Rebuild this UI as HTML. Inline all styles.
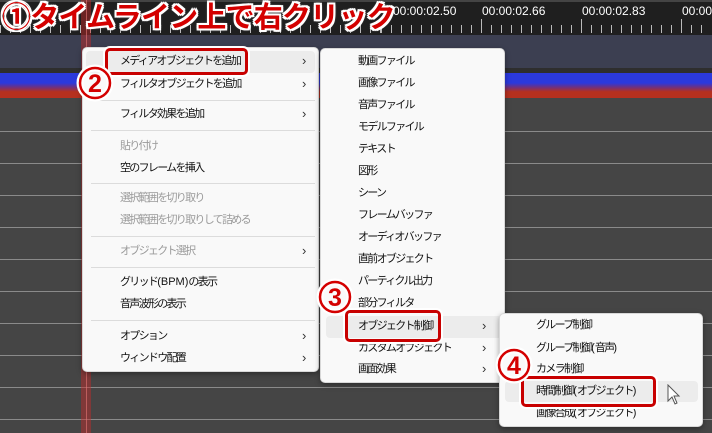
<!DOCTYPE html>
<html><head><meta charset="utf-8"><style>
*{margin:0;padding:0;box-sizing:border-box}
body{width:712px;height:433px;overflow:hidden;background:#454545;position:relative;font-family:"Liberation Sans","Noto Sans CJK JP",sans-serif}
.abs{position:absolute}
.menu{position:absolute;background:#f9f9f9;border:1px solid #d8d8d8;border-radius:5px;box-shadow:0 2px 6px rgba(0,0,0,.35)}
.it{position:absolute;font-size:11px;letter-spacing:-1.7px;color:#111;white-space:nowrap;line-height:16px}
.it b{font-weight:normal;letter-spacing:0}
.dis{color:#9a9a9a}
.chev{position:absolute;font-size:13px;color:#333;line-height:16px}
.sep{position:absolute;height:1px;background:#dcdcdc}
.hl{position:absolute;background:#ececec;border-radius:4px}
.ann{color:#d40000;font-weight:bold;text-shadow:0 0 3px #fff,0 0 3px #fff,2px 0 0 #fff,-2px 0 0 #fff,0 2px 0 #fff,0 -2px 0 #fff,2px 2px 0 #fff,-2px -2px 0 #fff,2px -2px 0 #fff,-2px 2px 0 #fff;white-space:nowrap}
.box{position:absolute;border:3px solid #c80000;border-radius:5px;box-shadow:0 0 0 2px #fff}
.hline{position:absolute;left:0;width:712px;height:1px;background:#8a8a8a}
.lbl{position:absolute;top:4px;font-size:12px;color:#fff}
.num{position:absolute}
</style></head><body>
<div class="abs" style="left:0;top:0;width:712px;height:35px;background:#1f1f1f"></div>
<div class="abs" style="left:0;top:0;width:712px;height:2px;background:#444"></div>
<svg class="abs" style="left:0;top:0" width="712" height="35">
<g stroke="#bbb" stroke-width="1">
<path d="M0.5 25V33M10.5 25V33M20.5 25V33M30.5 25V33M40.5 25V33M50.5 25V33M60.5 25V33M70.5 25V33M80.5 25V33M90.5 25V33M100.5 25V33M110.5 25V33M120.5 25V33M130.5 25V33M140.5 25V33M150.5 25V33M160.5 25V33M170.5 25V33M180.5 25V33M190.5 25V33M200.5 25V33M210.5 25V33M220.5 25V33M230.5 25V33M240.5 25V33M250.5 25V33M260.5 25V33M270.5 25V33M280.5 25V33M290.5 25V33M300.5 25V33M310.5 25V33M320.5 25V33M330.5 25V33M340.5 25V33M350.5 25V33M360.5 25V33M370.5 25V33M380.5 25V33M391.5 25V33M401.5 25V33M411.5 25V33M421.5 25V33M431.5 25V33M441.5 25V33M451.5 25V33M461.5 25V33M471.5 25V33M481.5 25V33M491.5 25V33M501.5 25V33M511.5 25V33M521.5 25V33M531.5 25V33M541.5 25V33M551.5 25V33M561.5 25V33M571.5 25V33M581.5 25V33M591.5 25V33M601.5 25V33M611.5 25V33M621.5 25V33M631.5 25V33M641.5 25V33M651.5 25V33M661.5 25V33M671.5 25V33M681.5 25V33M691.5 25V33M701.5 25V33"/>
<path d="M481.5 19V33M581.5 19V33M681.5 19V33M381.5 19V33"/>
</g></svg>
<div class="lbl" style="left:393px">00:00:02.50</div>
<div class="lbl" style="left:482px">00:00:02.66</div>
<div class="lbl" style="left:582px">00:00:02.83</div>
<div class="lbl" style="left:682px">00:00</div>
<div class="abs" style="left:0;top:35px;width:712px;height:33px;background:#3c3f51"></div>
<div class="abs" style="left:0;top:68px;width:712px;height:5px;background:#2e2e2e"></div>
<div class="abs" style="left:0;top:73px;width:712px;height:25px;background:linear-gradient(#2b39dc 0,#2b39dc 40%,#7a3070 60%,#b5301f 75%,#b5301f 100%)"></div>
<div class="hline" style="top:131px"></div><div class="hline" style="top:163px"></div><div class="hline" style="top:195px"></div><div class="hline" style="top:227px"></div><div class="hline" style="top:259px"></div><div class="hline" style="top:291px"></div><div class="hline" style="top:323px"></div><div class="hline" style="top:355px"></div><div class="hline" style="top:387px"></div><div class="hline" style="top:419px"></div>
<div class="abs" style="left:81px;top:0;width:10px;height:433px;background:rgba(200,40,40,.45)"></div>
<div class="abs" style="left:86px;top:0;width:1px;height:433px;background:rgba(230,120,120,.6)"></div>

<div class="menu" style="left:82px;top:47px;width:237px;height:325px">
<div class="hl" style="left:3px;top:3px;width:229px;height:22px"></div>
</div>
<div class="it" style="left:120px;top:53px">メディアオブジェクトを追加</div><div class="chev" style="left:302px;top:53px">›</div>
<div class="it" style="left:120px;top:76px">フィルタオブジェクトを追加</div><div class="chev" style="left:302px;top:76px">›</div>
<div class="sep" style="left:91px;top:100px;width:224px"></div>
<div class="it" style="left:120px;top:106px">フィルタ効果を追加</div><div class="chev" style="left:302px;top:106px">›</div>
<div class="sep" style="left:91px;top:130px;width:224px"></div>
<div class="it dis" style="left:120px;top:138px">貼り付け</div>
<div class="it" style="left:120px;top:160px">空のフレームを挿入</div>
<div class="sep" style="left:91px;top:183px;width:224px"></div>
<div class="it dis" style="left:120px;top:190px">選択範囲を切り取り</div>
<div class="it dis" style="left:120px;top:212px">選択範囲を切り取りして詰める</div>
<div class="sep" style="left:91px;top:236px;width:224px"></div>
<div class="it dis" style="left:120px;top:243px">オブジェクト選択</div><div class="chev dis" style="left:302px;top:243px">›</div>
<div class="sep" style="left:91px;top:267px;width:224px"></div>
<div class="it" style="left:120px;top:274px">グリッド<b>(BPM)</b>の表示</div>
<div class="it" style="left:120px;top:296px">音声波形の表示</div>
<div class="sep" style="left:91px;top:320px;width:224px"></div>
<div class="it" style="left:120px;top:328px">オプション</div><div class="chev" style="left:302px;top:328px">›</div>
<div class="it" style="left:120px;top:350px">ウィンドウ配置</div><div class="chev" style="left:302px;top:350px">›</div>

<div class="menu" style="left:320px;top:48px;width:185px;height:335px">
<div class="hl" style="left:5px;top:267px;width:176px;height:22px"></div>
</div>
<div class="it" style="left:358px;top:53px">動画ファイル</div>
<div class="it" style="left:358px;top:75px">画像ファイル</div>
<div class="it" style="left:358px;top:97px">音声ファイル</div>
<div class="it" style="left:358px;top:119px">モデルファイル</div>
<div class="it" style="left:358px;top:141px">テキスト</div>
<div class="it" style="left:358px;top:163px">図形</div>
<div class="it" style="left:358px;top:185px">シーン</div>
<div class="it" style="left:358px;top:207px">フレームバッファ</div>
<div class="it" style="left:358px;top:229px">オーディオバッファ</div>
<div class="it" style="left:358px;top:251px">直前オブジェクト</div>
<div class="it" style="left:358px;top:273px">パーティクル出力</div>
<div class="it" style="left:358px;top:295px">部分フィルタ</div>
<div class="it" style="left:358px;top:318px">オブジェクト制御</div><div class="chev" style="left:482px;top:318px">›</div>
<div class="it" style="left:358px;top:340px">カスタムオブジェクト</div><div class="chev" style="left:482px;top:340px">›</div>
<div class="it" style="left:358px;top:361px">画面効果</div><div class="chev" style="left:482px;top:361px">›</div>

<div class="menu" style="left:499px;top:313px;width:204px;height:114px">
<div class="hl" style="left:5px;top:67px;width:193px;height:21px"></div>
</div>
<div class="it" style="left:536px;top:317px">グループ制御</div>
<div class="it" style="left:536px;top:340px">グループ制御<b>(</b>音声<b>)</b></div>
<div class="it" style="left:536px;top:361px">カメラ制御</div>
<div class="it" style="left:536px;top:383px">時間制御<b>(</b>オブジェクト<b>)</b></div>
<div class="it" style="left:536px;top:405px">画像合成<b>(</b>オブジェクト<b>)</b></div>
<svg class="abs" style="left:667px;top:384px" width="14" height="22"><path d="M1 1V17L5 13L8 20L10 19L7 12H12Z" fill="#fff" stroke="#555" stroke-width="1"/></svg>

<div class="box" style="left:105px;top:48px;width:143px;height:27px"></div>
<div class="box" style="left:345px;top:310px;width:96px;height:32px"></div>
<div class="box" style="left:521px;top:376px;width:135px;height:31px"></div>

<div class="abs ann" style="left:2px;top:0px;font-size:29px;line-height:36px;letter-spacing:-0.8px">①タイムライン上で右クリック</div>

<svg class="num" style="left:76px;top:64px" width="38" height="38"><circle cx="19" cy="19" r="15" fill="none" stroke="#fff" stroke-width="7"/><circle cx="19" cy="19" r="15" fill="rgba(255,255,255,0.25)" stroke="#d40000" stroke-width="2.5"/><text x="19" y="28" text-anchor="middle" font-family="Liberation Sans" font-weight="bold" font-size="25" fill="#d40000">2</text></svg>
<svg class="num" style="left:316px;top:278px" width="38" height="38"><circle cx="19" cy="19" r="15" fill="none" stroke="#fff" stroke-width="7"/><circle cx="19" cy="19" r="15" fill="rgba(255,255,255,0.25)" stroke="#d40000" stroke-width="2.5"/><text x="19" y="28" text-anchor="middle" font-family="Liberation Sans" font-weight="bold" font-size="25" fill="#d40000">3</text></svg>
<svg class="num" style="left:495px;top:346px" width="38" height="38"><circle cx="19" cy="19" r="15" fill="none" stroke="#fff" stroke-width="7"/><circle cx="19" cy="19" r="15" fill="rgba(255,255,255,0.25)" stroke="#d40000" stroke-width="2.5"/><text x="19" y="28" text-anchor="middle" font-family="Liberation Sans" font-weight="bold" font-size="25" fill="#d40000">4</text></svg>
</body></html>
